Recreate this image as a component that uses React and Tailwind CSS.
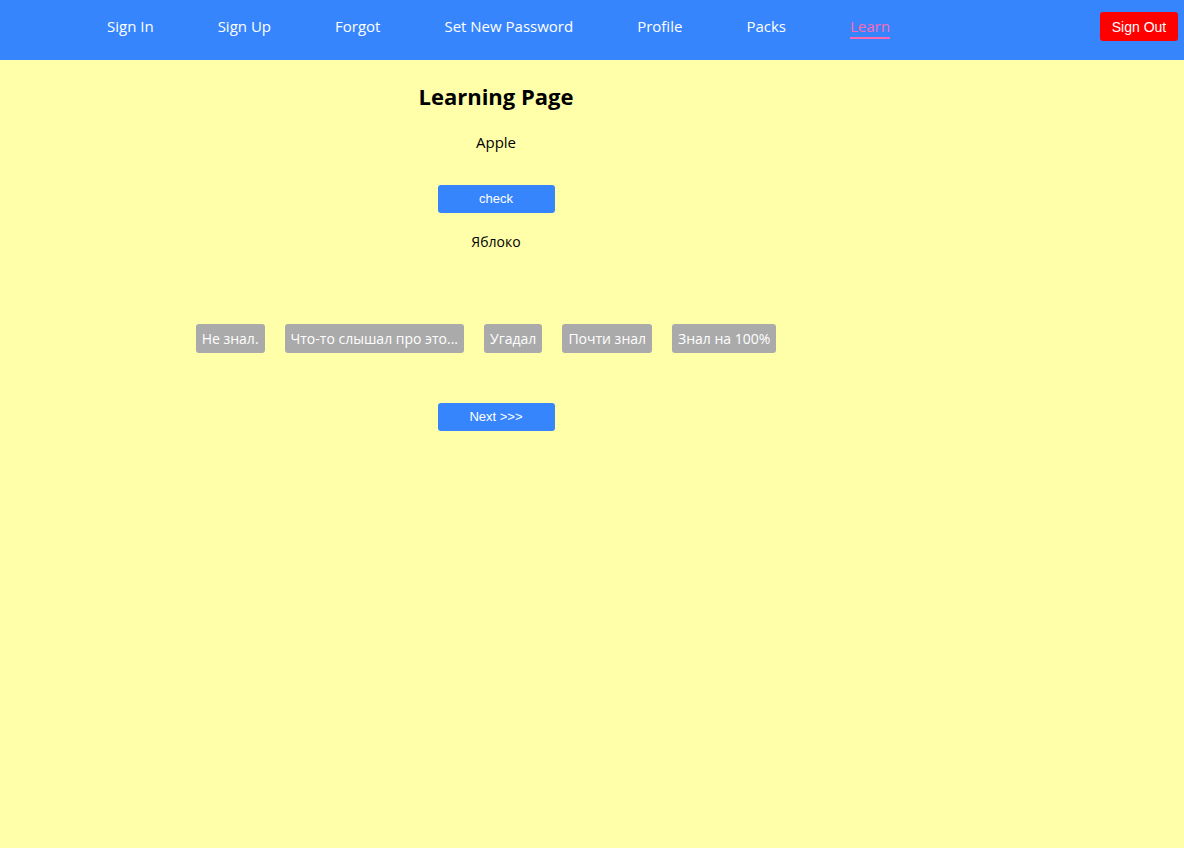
import { useState } from "react";

const links = ["Sign In", "Sign Up", "Forgot", "Set New Password", "Profile", "Packs", "Learn"];
const grades = ["Не знал.", "Что-то слышал про это...", "Угадал", "Почти знал", "Знал на 100%"];

export default function App() {
  const [shown, setShown] = useState(true);

  return (
    <div className="min-h-[848px] bg-[#ffffaa] font-['Open_Sans',sans-serif]">
      <header className="flex h-[60px] items-center bg-[#3785fd] pl-[107px] pr-[6px]">
        <nav className="flex gap-[64px] text-[15px] text-white">
          {links.map((l) => (
            <a
              key={l}
              href="#"
              className={
                l === "Learn"
                  ? "-mt-[8px] text-[#ff69b4] underline decoration-[#ff69b4] decoration-[1.5px] underline-offset-[5px]"
                  : "-mt-[8px]"
              }
            >
              {l}
            </a>
          ))}
        </nav>
        <button className="-mt-[7px] ml-auto h-[29px] w-[78px] rounded-[3px] bg-[#ff0000] pt-[1px] font-['Liberation_Sans',sans-serif] text-[14px] text-white">
          Sign Out
        </button>
      </header>

      <main className="box-content flex w-[800px] flex-col items-center pl-[96px]">
        <h1 className="mt-[20px] text-[22px] font-bold text-black">Learning Page</h1>
        <div className="mt-[18px] text-[15px] text-black">Apple</div>
        <button
          onClick={() => setShown(true)}
          className="mt-[31px] h-[28px] w-[117px] rounded-[3px] bg-[#3785fd] font-['Liberation_Sans',sans-serif] text-[13px] text-white"
        >
          check
        </button>
        {shown && <div className="mt-[18px] text-[14px] text-black">Яблоко</div>}

        <div className="mt-[72px] flex">
          {grades.map((g) => (
            <button
              key={g}
              className="mr-[20px] h-[29px] rounded-[3px] bg-[#aaaaaa] px-[6px] text-[14px] text-white"
            >
              {g}
            </button>
          ))}
        </div>

        <button className="mt-[50px] h-[28px] w-[117px] rounded-[3px] bg-[#3785fd] font-['Liberation_Sans',sans-serif] text-[13px] text-white">
          Next &gt;&gt;&gt;
        </button>
      </main>
    </div>
  );
}
